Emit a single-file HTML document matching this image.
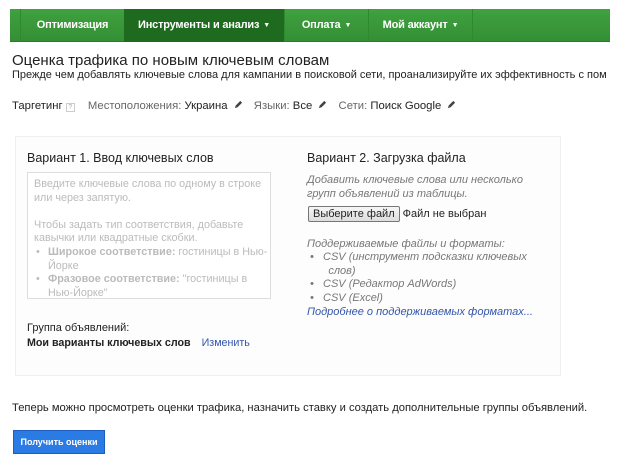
<!DOCTYPE html>
<html><head><meta charset="utf-8"><style>
*{margin:0;padding:0;box-sizing:border-box}
body{width:620px;height:473px;background:#fff;font-family:"Liberation Sans",Arial,sans-serif;color:#222;position:relative;overflow:hidden}
.abs{position:absolute;white-space:nowrap}
.nav{position:absolute;left:10px;top:9px;width:600px;height:33px;background:linear-gradient(#3fa13f,#348f34);border-bottom:1px solid #2a7a2a}
.tab{position:absolute;top:0;height:33px;line-height:33px;color:#fff;font-weight:bold;font-size:11px;text-align:center;border-left:1px solid #2f8a2f;letter-spacing:-0.2px}
.car{font-size:7px;margin-left:4px;vertical-align:1px}
.pen{display:inline-block;width:9px;height:9px;margin-left:3px}
.g{color:#666}
.panel{position:absolute;left:15px;top:136px;width:546px;height:240px;border:1px solid #f0f0f0;background:#fdfdfd}
.ta{position:absolute;left:27px;top:172px;width:244px;height:127px;border:1px solid #ddd;background:#fff;color:#bbb;font-size:10.8px;line-height:13.6px;padding:5px 6px;overflow:hidden;white-space:nowrap}
.it{font-style:italic;color:#777;font-size:11px;line-height:14px}
</style></head><body>
<div class="nav">
<div class="tab" style="left:10px;width:104px">Оптимизация</div>
<div class="tab" style="left:114px;width:160px;background:#1e6a1e;border-left:none">Инструменты и анализ<span class="car">▼</span></div>
<div class="tab" style="left:274px;width:84px">Оплата<span class="car">▼</span></div>
<div class="tab" style="left:358px;width:104px">Мой аккаунт<span class="car">▼</span></div>
<div class="tab" style="left:462px;width:1px"></div>
</div>
<div class="abs" style="left:12px;top:52px;font-size:15px;color:#222">Оценка трафика по новым ключевым словам</div>
<div class="abs" style="left:12px;top:69px;font-size:11px;color:#222;width:608px;overflow:hidden">Прежде чем добавлять ключевые слова для кампании в поисковой сети, проанализируйте их эффективность с пом</div>
<div class="abs" style="left:12px;top:100px;font-size:11.3px">Таргетинг <span style="display:inline-block;width:9px;height:9px;border:1px solid #ccc;font-size:7px;line-height:8px;text-align:center;color:#aaa">?</span>
<span class="g" style="margin-left:10px">Местоположения:</span> Украина <svg class="pen" viewBox="0 0 10 10"><path d="M1 9l1-3 5-5 2 2-5 5z" fill="#444"/></svg>
<span class="g" style="margin-left:8px">Языки:</span> Все <svg class="pen" viewBox="0 0 10 10"><path d="M1 9l1-3 5-5 2 2-5 5z" fill="#444"/></svg>
<span class="g" style="margin-left:8px">Сети:</span> Поиск Google <svg class="pen" viewBox="0 0 10 10"><path d="M1 9l1-3 5-5 2 2-5 5z" fill="#444"/></svg></div>
<div class="panel"></div>
<div class="abs" style="left:27px;top:151px;font-size:12.5px">Вариант 1. Ввод ключевых слов</div>
<div class="ta">Введите ключевые слова по одному в строке<br>или через запятую.<br><br>Чтобы задать тип соответствия, добавьте<br>кавычки или квадратные скобки.<br>
<div style="padding-left:14px;position:relative"><span style="position:absolute;left:2px">•</span><b>Широкое соответствие:</b> гостиницы в Нью-<br>Йорке</div>
<div style="padding-left:14px;position:relative"><span style="position:absolute;left:2px">•</span><b>Фразовое соответствие:</b> "гостиницы в<br>Нью-Йорке"</div></div>
<div class="abs" style="left:27px;top:322px;font-size:11px">Группа объявлений:</div>
<div class="abs" style="left:27px;top:337px;font-size:10.7px"><b>Мои варианты ключевых слов</b> <span style="color:#3355aa;margin-left:8px">Изменить</span></div>
<div class="abs" style="left:307px;top:151px;font-size:12.5px">Вариант 2. Загрузка файла</div>
<div class="abs it" style="left:307px;top:173px">Добавить ключевые слова или несколько<br>групп объявлений из таблицы.</div>
<div class="abs" style="left:308px;top:206px;font-size:11px"><span style="display:inline-block;border:1px solid #777;border-radius:2px;background:linear-gradient(#f6f6f6,#ddd);padding:1px 4px">Выберите файл</span> Файл не выбран</div>
<div class="abs it" style="left:307px;top:237px">Поддерживаемые файлы и форматы:</div>
<div class="abs it" style="left:310px;top:251px;line-height:13.5px">•&nbsp;&nbsp; CSV (инструмент подсказки ключевых<br>&nbsp;&nbsp;&nbsp;&nbsp;&nbsp; слов)<br>•&nbsp;&nbsp; CSV (Редактор AdWords)<br>•&nbsp;&nbsp; CSV (Excel)</div>
<div class="abs it" style="left:307px;top:305px;color:#3355aa">Подробнее о поддерживаемых форматах...</div>
<div class="abs" style="left:12px;top:402px;font-size:11.2px">Теперь можно просмотреть оценки трафика, назначить ставку и создать дополнительные группы объявлений.</div>
<div class="abs" style="left:13px;top:430px;width:92px;height:24px;background:#2b7be4;border:1px solid #1c5fc0;color:#fff;font-size:9px;font-weight:bold;line-height:22px;text-align:center">Получить оценки</div>
</body></html>
